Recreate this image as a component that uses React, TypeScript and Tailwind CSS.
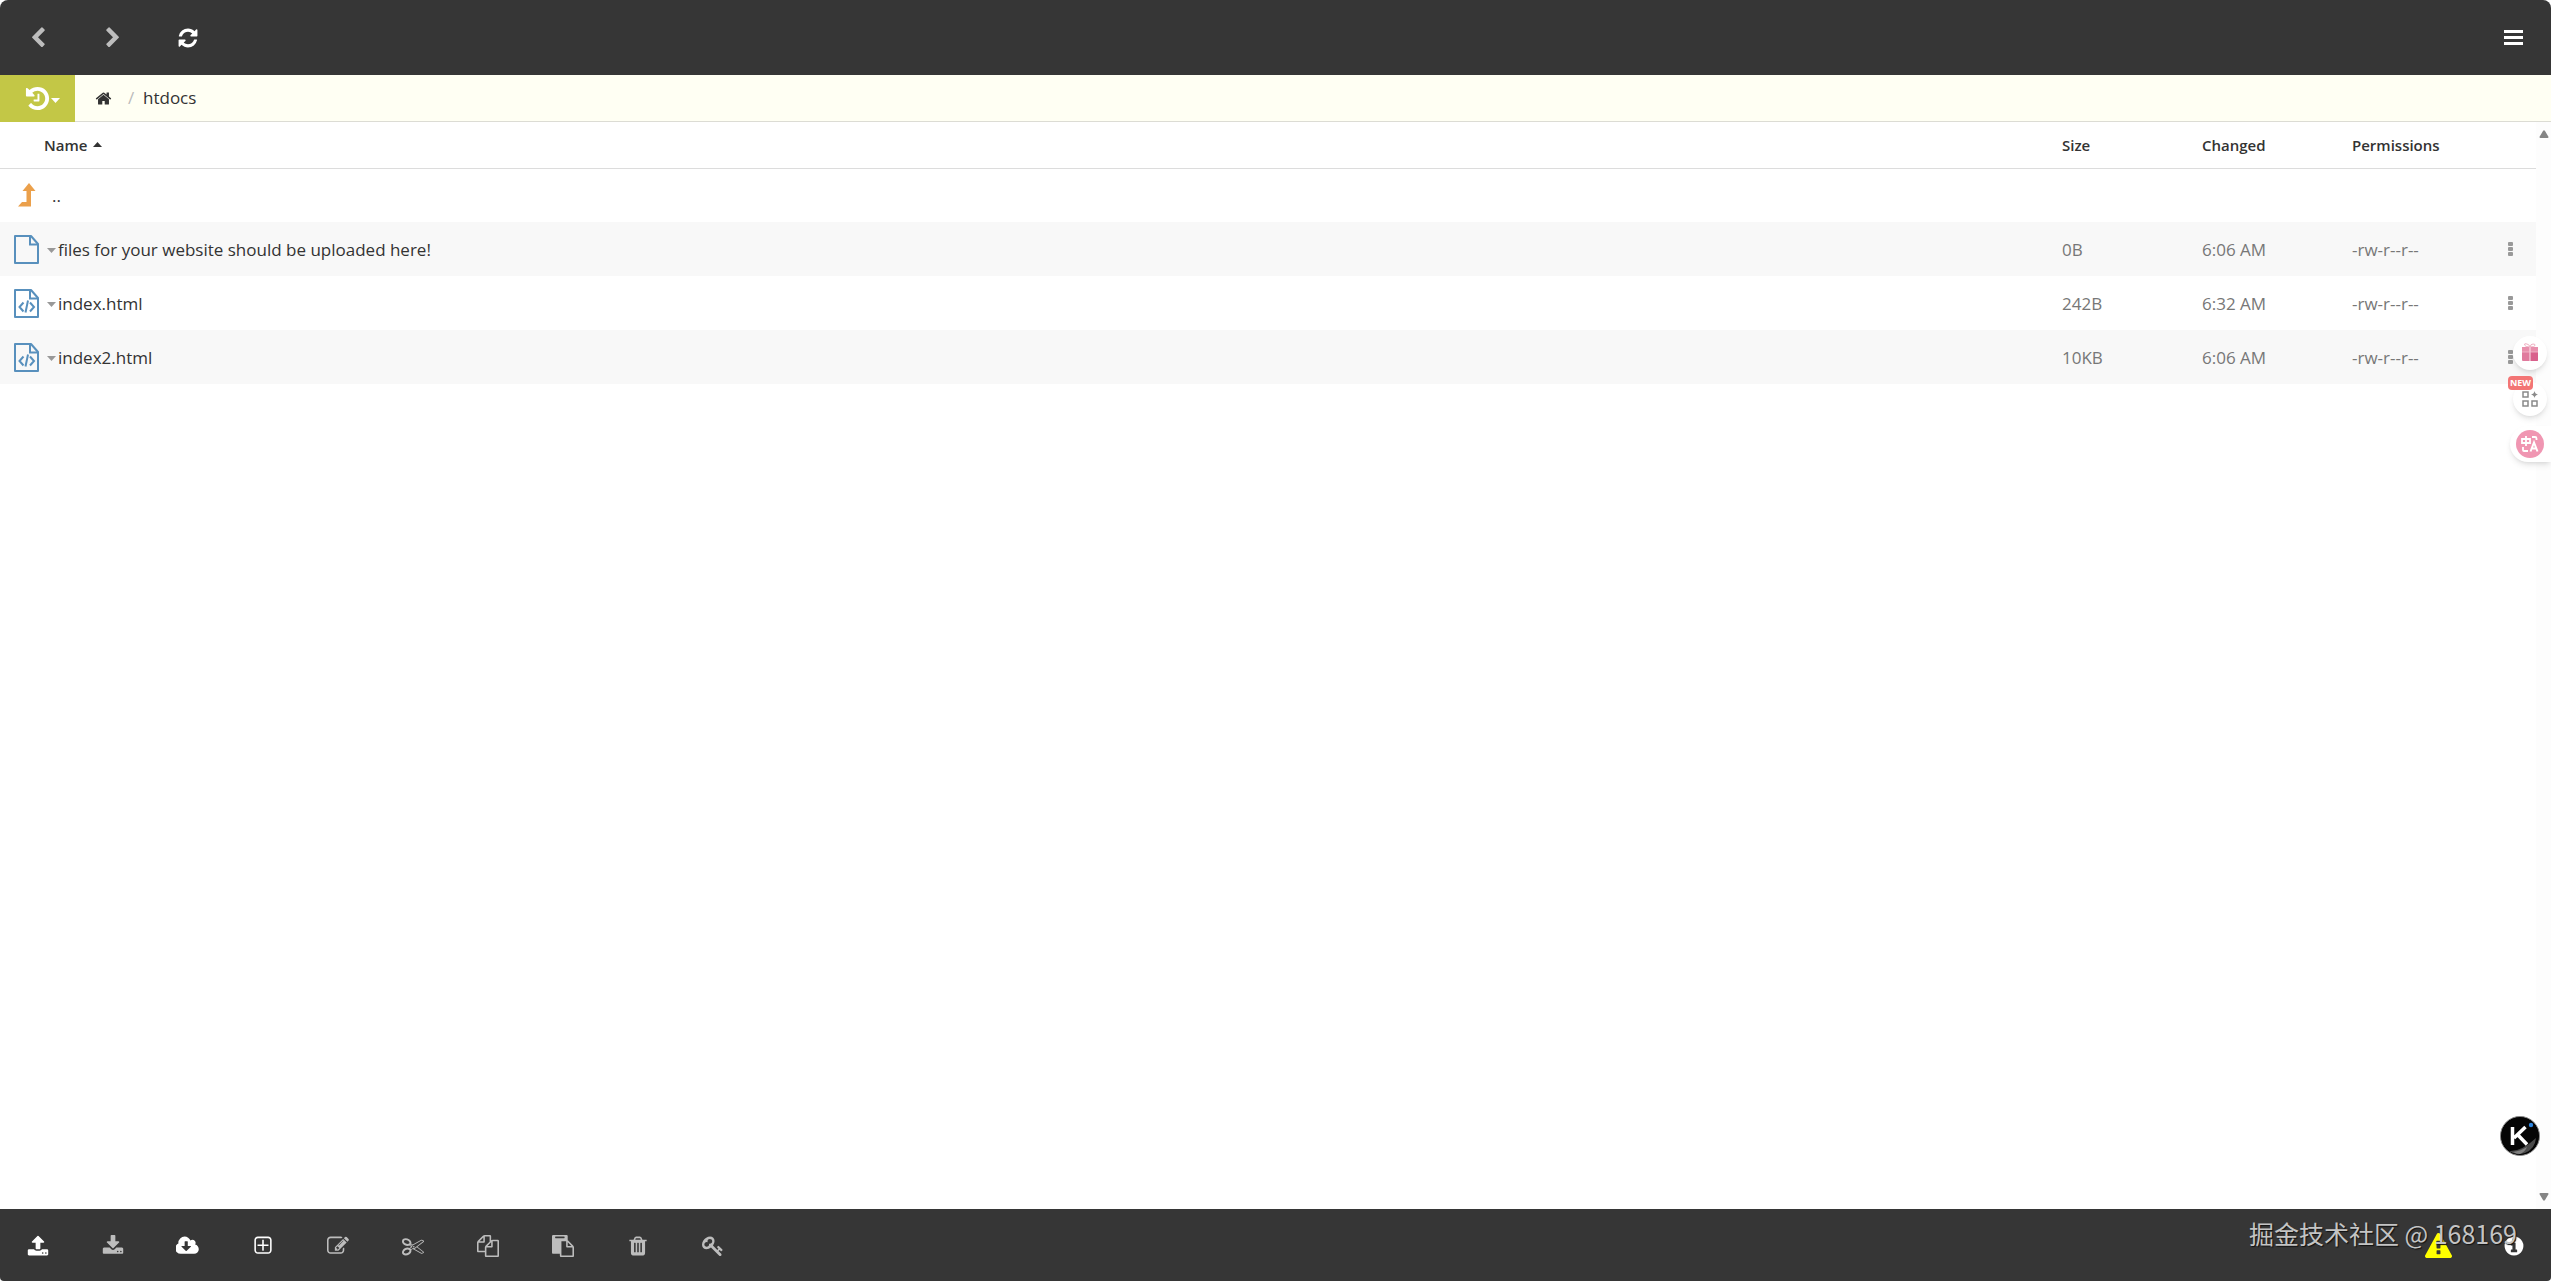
import type { ReactNode } from "react";

type GlyphProps = { d: string; size?: number; width?: number; className?: string };

function Glyph({ d, size = 22, width = 1792, className }: GlyphProps) {
  return (
    <svg
      viewBox={`0 0 ${width} 1792`}
      height={size}
      width={(size * width) / 1792}
      fill="currentColor"
      className={className}
      aria-hidden="true"
    >
      <path d={d} />
    </svg>
  );
}

const paths = {
  back: "M1427 301l-531 531 531 531q19 19 19 45t-19 45l-166 166q-19 19-45 19t-45-19l-742-742q-19-19-19-45t19-45l742-742q19-19 45-19t45 19l166 166q19 19 19 45t-19 45z",
  forward:
    "M1363 877l-742 742q-19 19-45 19t-45-19l-166-166q-19-19-19-45t19-45l531-531-531-531q-19-19-19-45t19-45l166-166q19-19 45-19t45 19l742 742q19 19 19 45t-19 45z",
  refresh:
    "M1639 1056q0 5-1 7-64 268-268 434.5t-478 166.5q-146 0-282.5-55t-243.5-157l-129 129q-19 19-45 19t-45-19-19-45v-448q0-26 19-45t45-19h448q26 0 45 19t19 45-19 45l-137 137q71 66 161 102t187 36q134 0 250-65t186-179q11-17 53-117 8-23 30-23h192q13 0 22.5 9.5t9.5 22.5zm25-800v448q0 26-19 45t-45 19h-448q-26 0-45-19t-19-45 19-45l138-138q-148-137-349-137-134 0-250 65t-186 179q-11 17-53 117-8 23-30 23h-199q-13 0-22.5-9.5t-9.5-22.5v-7q65-268 270-434.5t480-166.5q146 0 284 55.5t245 156.5l130-129q19-19 45-19t45 19 19 45z",
  history:
    "M1664 896q0 156-61 298t-164 245-245 164-298 61q-172 0-327-72.5t-264-204.5q-7-10-6.5-22.5t8.5-20.5l137-138q10-9 25-9 16 2 23 12 73 95 179 147t225 52q104 0 198.5-40.5t163.5-109.5 109.5-163.5 40.5-198.5-40.5-198.5-109.5-163.5-163.5-109.5-198.5-40.5q-98 0-188 35.5t-160 101.5l137 138q31 30 14 69-17 40-59 40h-448q-26 0-45-19t-19-45v-448q0-42 40-59 39-17 69 14l130 129q107-101 244.5-156.5t284.5-55.5q156 0 298 61t245 164 164 245 61 298zm-640-288v448q0 14-9 23t-23 9h-320q-14 0-23-9t-9-23v-64q0-14 9-23t23-9h224v-352q0-14 9-23t23-9h64q14 0 23 9t9 23z",
  home: "M1472 992v480q0 26-19 45t-45 19h-384v-384h-256v384h-384q-26 0-45-19t-19-45v-480q0-1 .5-3t.5-3l575-474 575 474q1 2 1 6zm223-69l-62 74q-8 9-21 11h-3q-13 0-21-7l-692-577-692 577q-12 8-24 7-13-2-21-11l-62-74q-8-10-7-23.5t11-21.5l719-599q32-26 76-26t76 26l244 204v-195q0-14 9-23t23-9h192q14 0 23 9t9 23v408l219 182q10 8 11 21.5t-7 23.5z",
  upload:
    "M1344 1472q0-26-19-45t-45-19-45 19-19 45 19 45 45 19 45-19 19-45zm256 0q0-26-19-45t-45-19-45 19-19 45 19 45 45 19 45-19 19-45zm128-224v320q0 40-28 68t-68 28h-1472q-40 0-68-28t-28-68v-320q0-40 28-68t68-28h427q21 56 70.5 92t110.5 36h256q61 0 110.5-36t70.5-92h427q40 0 68 28t28 68zm-325-648q-17 40-59 40h-256v448q0 26-19 45t-45 19h-256q-26 0-45-19t-19-45v-448h-256q-42 0-59-40-17-39 14-69l448-448q18-19 45-19t45 19l448 448q31 30 14 69z",
  download:
    "M1344 1344q0-26-19-45t-45-19-45 19-19 45 19 45 45 19 45-19 19-45zm256 0q0-26-19-45t-45-19-45 19-19 45 19 45 45 19 45-19 19-45zm128-224v320q0 40-28 68t-68 28h-1472q-40 0-68-28t-28-68v-320q0-40 28-68t68-28h465l135 136q58 56 136 56t136-56l136-136h464q40 0 68 28t28 68zm-325-569q17 41-14 70l-448 448q-18 19-45 19t-45-19l-448-448q-31-29-14-70 17-39 59-39h256v-448q0-26 19-45t45-19h256q26 0 45 19t19 45v448h256q42 0 59 39z",
  cloud:
    "M1216 928q0-14-9-23t-23-9h-224v-352q0-13-9.5-22.5t-22.5-9.5h-192q-13 0-22.5 9.5t-9.5 22.5v352h-224q-13 0-22.5 9.5t-9.5 22.5q0 14 9 23l352 352q9 9 23 9t23-9l351-351q10-12 10-24zm640 224q0 159-112.5 271.5t-271.5 112.5h-1088q-185 0-316.5-131.5t-131.5-316.5q0-130 70-240t188-165q-2-30-2-43 0-212 150-362t362-150q156 0 285.5 87t188.5 231q71-62 166-62 106 0 181 75t75 181q0 76-41 138 130 31 213.5 135.5t83.5 238.5z",
  create:
    "M1344 800v64q0 14-9 23t-23 9h-352v352q0 14-9 23t-23 9h-64q-14 0-23-9t-9-23v-352h-352q-14 0-23-9t-9-23v-64q0-14 9-23t23-9h352v-352q0-14 9-23t23-9h64q14 0 23 9t9 23v352h352q14 0 23 9t9 23zm128 448v-832q0-66-47-113t-113-47h-832q-66 0-113 47t-47 113v832q0 66 47 113t113 47h832q66 0 113-47t47-113zm128-832v832q0 119-84.5 203.5t-203.5 84.5h-832q-119 0-203.5-84.5t-84.5-203.5v-832q0-119 84.5-203.5t203.5-84.5h832q119 0 203.5 84.5t84.5 203.5z",
  edit: "M888 1184l116-116-152-152-116 116v56h96v96h56zm440-720q-16-16-33 1l-350 350q-17 17-1 33t33-1l350-350q17-17 1-33zm80 594v190q0 119-84.5 203.5t-203.5 84.5h-832q-119 0-203.5-84.5t-84.5-203.5v-832q0-119 84.5-203.5t203.5-84.5h832q63 0 117 25 15 7 18 23 3 17-9 29l-49 49q-14 14-32 8-23-6-45-6h-832q-66 0-113 47t-47 113v832q0 66 47 113t113 47h832q66 0 113-47t47-113v-126q0-13 9-22l64-64q15-15 35-7t20 29zm-96-738l288 288-672 672h-288v-288zm444 132l-92 92-288-288 92-92q28-28 68-28t68 28l152 152q28 28 28 68t-28 68z",
  cut: "M960 896q26 0 45 19t19 45-19 45-45 19-45-19-19-45 19-45 45-19zm300 64l507 398q28 20 25 56-5 35-35 51l-128 64q-13 7-29 7-17 0-31-8l-690-387-110 66q-8 4-12 5 14 49 10 97-7 77-56 147.5t-132 123.5q-132 84-277 84-136 0-222-78-90-84-79-207 7-76 56-147t131-124q132-84 278-84 83 0 151 31 9-13 22-22l122-73-122-73q-13-9-22-22-68 31-151 31-146 0-278-84-82-53-131-124t-56-147q-5-59 15.5-113t63.5-93q85-79 222-79 145 0 277 84 83 52 132 123t56 148q4 48-10 97 4 1 12 5l110 66 690-387q14-8 31-8 16 0 29 7l128 64q30 16 35 51 3 36-25 56zm-681-260q46-42 21-108t-106-117q-92-59-192-59-74 0-113 36-46 42-21 108t106 117q92 59 192 59 74 0 113-36zm-85 745q81-51 106-117t-21-108q-39-36-113-36-100 0-192 59-81 51-106 117t21 108q39 36 113 36 100 0 192-59zm178-613l96 58v-11q0-36 33-56l14-8-79-44-26 26q-3 3-10 11t-12 12q-2 2-4 3.5t-3 2.5zm224 224l96 32 736-576-128-64-768 431v113l-160 96 9 8q2 2 7 6 4 4 11 12t11 12l26 26zm704 416l128-64-520-408-177 138q-2 3-13 7z",
  copy: "M1696 384q40 0 68 28t28 68v1216q0 40-28 68t-68 28h-960q-40 0-68-28t-28-68v-288h-544q-40 0-68-28t-28-68v-672q0-40 20-88t48-76l408-408q28-28 76-48t88-20h416q40 0 68 28t28 68v328q68-40 128-40h416zm-544 213l-299 299h299v-299zm-640-384l-299 299h299v-299zm196 647l316-316v-416h-384v416q0 40-28 68t-68 28h-416v640h512v-256q0-40 20-88t48-76zm956 804v-1152h-384v416q0 40-28 68t-68 28h-416v640h896z",
  paste:
    "M768 1664h896v-640h-416q-40 0-68-28t-28-68v-416h-384v1152zm256-1440v-64q0-13-9.5-22.5t-22.5-9.5h-704q-13 0-22.5 9.5t-9.5 22.5v64q0 13 9.5 22.5t22.5 9.5h704q13 0 22.5-9.5t9.5-22.5zm256 672h299l-299-299v299zm512 128v672q0 40-28 68t-68 28h-960q-40 0-68-28t-28-68v-160h-544q-40 0-68-28t-28-68v-1344q0-40 28-68t68-28h1088q40 0 68 28t28 68v328q21 13 36 28l408 408q28 28 48 76t20 88z",
  trash:
    "M704 1376v-704q0-14-9-23t-23-9h-64q-14 0-23 9t-9 23v704q0 14 9 23t23 9h64q14 0 23-9t9-23zm256 0v-704q0-14-9-23t-23-9h-64q-14 0-23 9t-9 23v704q0 14 9 23t23 9h64q14 0 23-9t9-23zm256 0v-704q0-14-9-23t-23-9h-64q-14 0-23 9t-9 23v704q0 14 9 23t23 9h64q14 0 23-9t9-23zm-544-992h448l-48-117q-7-9-17-11h-317q-10 2-17 11zm928 32v64q0 14-9 23t-23 9h-96v948q0 83-47 143.5t-113 60.5h-832q-66 0-113-58.5t-47-141.5v-952h-96q-14 0-23-9t-9-23v-64q0-14 9-23t23-9h309l70-167q15-37 54-63t79-26h320q40 0 79 26t54 63l70 167h309q14 0 23 9t9 23z",
  key: "M832 512q0-80-56-136t-136-56-136 56-56 136q0 42 19 83-41-19-83-19-80 0-136 56t-56 136 56 136 136 56 136-56 56-136q0-42-19-83 41 19 83 19 80 0 136-56t56-136zm851 704q0 17-49 66t-66 49q-9 0-28.5-16t-36.5-33-38.5-40-24.5-26l-96 96 220 220q28 28 28 68 0 42-39 81t-81 39q-40 0-68-28l-671-671q-176 131-365 131-163 0-265.5-102.5t-102.5-265.5q0-160 95-313t248-248 313-95q163 0 265.5 102.5t102.5 265.5q0 189-131 365l355 355 96-96q-3-3-26-24.5t-40-38.5-33-36.5-16-28.5q0-17 49-66t66-49q13 0 23 10 6 6 46 44.5t82 79.5 86.5 86 73 78 28.5 41z",
  warning:
    "M1024 1375v-190q0-14-9.5-23.5t-22.5-9.5h-192q-13 0-22.5 9.5t-9.5 23.5v190q0 14 9.5 23.5t22.5 9.5h192q13 0 22.5-9.5t9.5-23.5zm-2-374l18-459q0-12-10-19-13-11-24-11h-220q-11 0-24 11-10 7-10 21l17 457q0 10 10 16.5t24 6.5h185q14 0 23.5-6.5t10.5-16.5zm-14-934l768 1408q35 63-2 126-17 29-46.5 46t-63.5 17h-1536q-34 0-63.5-17t-46.5-46q-37-63-2-126l768-1408q17-31 47-49t65-18 65 18 47 49z",
  info: "M1152 1376v-160q0-14-9-23t-23-9h-96v-512q0-14-9-23t-23-9h-320q-14 0-23 9t-9 23v160q0 14 9 23t23 9h96v320h-96q-14 0-23 9t-9 23v160q0 14 9 23t23 9h448q14 0 23-9t9-23zm-128-896v-160q0-14-9-23t-23-9h-192q-14 0-23 9t-9 23v160q0 14 9 23t23 9h192q14 0 23-9t9-23zm640 416q0 209-103 385.5t-279.5 279.5-385.5 103-385.5-103-279.5-279.5-103-385.5 103-385.5 279.5-279.5 385.5-103 385.5 103 279.5 279.5 103 385.5z",
};

function Caret({ up = false, className }: { up?: boolean; className?: string }) {
  return (
    <svg width="9" height="5" viewBox="0 0 9 5" fill="currentColor" className={className} aria-hidden="true">
      <path d={up ? "M0 5L4.5 0 9 5z" : "M0 0h9L4.5 5z"} />
    </svg>
  );
}

function ScrollArrow({ down = false }: { down?: boolean }) {
  return (
    <svg width="10" height="8" viewBox="0 0 10 8" fill="#858585" aria-hidden="true">
      <path
        d={
          down
            ? "M1.500 0h7q1.500 0 .8 1.400L6 7q-1 1.500-2 0L.7 1.400Q0 0 1.500 0z"
            : "M1.500 8h7q1.500 0 .8-1.400L6 1q-1-1.500-2 0L.7 6.600Q0 8 1.500 8z"
        }
      />
    </svg>
  );
}

function FileIcon({ code }: { code: boolean }) {
  return (
    <svg width="25" height="29" viewBox="0 0 25 29" fill="none" stroke="#5890bd" strokeWidth="2" aria-hidden="true">
      <path d="M1 1h16l7 8v19H1z" strokeLinejoin="round" />
      <path d="M16 1v8.500h8" />
      {code && <path d="M9.500 13.500L5.500 18l4 4.500M16 13.500l4 4.500-4 4.500M14 11.500l-2.500 12" />}
    </svg>
  );
}

function BarButton({ label, dim = false, children }: { label: string; dim?: boolean; children: ReactNode }) {
  return (
    <button
      type="button"
      aria-label={label}
      className={`flex h-full w-[75px] items-center justify-center ${dim ? "text-[#bdbdbd]" : "text-white"}`}
    >
      {children}
    </button>
  );
}

const actions = [
  { label: "Upload", d: paths.upload, dim: false },
  { label: "Download", d: paths.download, dim: true },
  { label: "Fetch file", d: paths.cloud, dim: false, width: 1920 },
  { label: "New", d: paths.create, dim: false },
  { label: "Edit", d: paths.edit, dim: true },
  { label: "Cut", d: paths.cut, dim: true },
  { label: "Copy", d: paths.copy, dim: true },
  { label: "Paste", d: paths.paste, dim: true },
  { label: "Delete", d: paths.trash, dim: true },
  { label: "Permissions", d: paths.key, dim: true },
];

const files = [
  { name: "files for your website should be uploaded here!", size: "0B", changed: "6:06 AM", code: false },
  { name: "index.html", size: "242B", changed: "6:32 AM", code: true },
  { name: "index2.html", size: "10KB", changed: "6:06 AM", code: true },
];

function TopBar() {
  return (
    <header className="flex h-[75px] shrink-0 justify-between rounded-t-lg bg-[#363636]">
      <div className="flex">
        <BarButton label="Back" dim>
          <Glyph d={paths.back} />
        </BarButton>
        <BarButton label="Forward" dim>
          <Glyph d={paths.forward} />
        </BarButton>
        <BarButton label="Refresh">
          <Glyph d={paths.refresh} />
        </BarButton>
      </div>
      <BarButton label="Menu">
        <svg width="19" height="15" viewBox="0 0 19 15" fill="currentColor" aria-hidden="true">
          <path d="M0 0h19v3H0zM0 6h19v3H0zM0 12h19v3H0z" />
        </svg>
      </BarButton>
    </header>
  );
}

function Breadcrumb() {
  return (
    <nav aria-label="Path" className="flex h-[47px] shrink-0 bg-[#fffff3]">
      <button
        type="button"
        aria-label="History"
        className="flex w-[75px] items-center justify-end bg-[#c3c746] pr-[15px] text-white"
      >
        <Glyph d={paths.history} size={27} />
        <Caret className="mt-1" />
      </button>
      <div className="flex grow items-center border-b border-[#dcdcd4] pl-5">
        <a href="#home" aria-label="Home">
          <Glyph d={paths.home} size={17} />
        </a>
        <span className="w-[31px] pl-4 text-[#bbb]">/</span>
        <a href="#htdocs">htdocs</a>
      </div>
    </nav>
  );
}

function FileTable() {
  return (
    <table className="w-full table-fixed border-collapse self-start text-left">
      <colgroup>
        <col />
        <col className="w-[140px]" />
        <col className="w-[150px]" />
        <col className="w-[142px]" />
        <col className="w-[52px]" />
      </colgroup>
      <thead>
        <tr className="h-[46px] border-b border-[#dcdcdc] text-[15px]">
          <th className="pl-11 font-semibold">
            <button type="button" className="flex items-center gap-1.5">
              Name
              <Caret up />
            </button>
          </th>
          <th className="pl-[10px] font-semibold">Size</th>
          <th className="pl-[10px] font-semibold">Changed</th>
          <th className="pl-[10px] font-semibold">Permissions</th>
          <th aria-label="Actions" />
        </tr>
      </thead>
      <tbody>
        <tr className="h-[54px]">
          <td colSpan={5} className="pl-[18px]">
            <a href="#up" className="flex items-center gap-4">
              <svg width="18" height="24" viewBox="0 0 18 24" fill="#eba04b" aria-hidden="true">
                <path d="M11 0l6.500 8H13v15.500H0L4 19h4.500V8H4.500z" />
              </svg>
              ..
            </a>
          </td>
        </tr>
        {files.map((file) => (
          <tr key={file.name} className="h-[54px] text-[#777] odd:bg-white even:bg-[#f8f8f8]">
            <td className="pl-[14px]">
              <div className="flex items-center">
                <FileIcon code={file.code} />
                <Caret className="ml-2 mr-0.5 mt-0.5 text-[#999]" />
                <a href={`#${file.name}`} className="pt-0.5 text-[#333]">
                  {file.name}
                </a>
              </div>
            </td>
            <td className="pl-[10px] pt-0.5">{file.size}</td>
            <td className="pl-[10px] pt-0.5">{file.changed}</td>
            <td className="pl-[10px] pt-0.5">-rw-r--r--</td>
            <td>
              <button type="button" aria-label={`Actions for ${file.name}`} className="flex w-full justify-center">
                <svg width="5" height="15" viewBox="0 0 5 15" fill="#999" aria-hidden="true">
                  <rect width="5" height="4" rx="1" />
                  <rect y="5" width="5" height="4" rx="1" />
                  <rect y="10" width="5" height="4" rx="1" />
                </svg>
              </button>
            </td>
          </tr>
        ))}
      </tbody>
    </table>
  );
}

// Browser extension widgets that float over the right edge
function FloatingTools() {
  return (
    <div className="absolute right-0 top-[336px] flex flex-col items-end">
      <button
        type="button"
        aria-label="Rewards"
        className="mr-1 flex size-[34px] items-center justify-center rounded-full bg-white shadow-md"
      >
        <svg width="18" height="20" viewBox="0 0 18 20" aria-hidden="true">
          <path d="M9 4Q4 4 3.500 2T6 1t3 3q.5-3 3-3t2 1.500T9 4z" fill="none" stroke="#eeb0c2" />
          <path d="M1 4h16v5H1z" fill="#e88fac" />
          <path d="M1 9h16v8q0 1-1 1H2q-1 0-1-1z" fill="#e07a9d" />
          <path d="M9 9h8v8q0 1-1 1H9z" fill="#d9608c" />
          <path d="M9 4v14" stroke="#fbe6ed" strokeWidth="1" />
          <path d="M1 9h16" stroke="#f3bccd" strokeWidth=".8" />
        </svg>
      </button>
      <div className="relative mr-1 mt-3">
        <button
          type="button"
          aria-label="Apps"
          className="flex size-[34px] items-center justify-center rounded-full bg-white shadow-md"
        >
          <svg width="16" height="16" viewBox="0 0 16 16" fill="none" stroke="#8a8a8a" strokeWidth="1.500" aria-hidden="true">
            <path d="M1 1h5v5H1zM1 10h5v5H1zM10 10h5v5h-5z" />
            <path d="M12.500 0q.5 3 3.500 3.500-3 .5-3.500 3.500-.5-3-3.500-3.500 3-.5 3.500-3.500z" fill="#8a8a8a" stroke="none" />
          </svg>
        </button>
        <span className="absolute -top-1.5 right-3.5 rounded bg-[#f37575] px-0.5 text-[9px] font-bold leading-[14px] text-white">
          NEW
        </span>
      </div>
      <div className="mt-2.5 flex h-9 w-[41px] items-center rounded-l-full bg-white pl-1.5 shadow-md">
        <button
          type="button"
          aria-label="Translate"
          className="flex size-7 items-center justify-center rounded-full bg-[#f096b2]"
        >
          <svg width="18" height="18" viewBox="0 0 18 18" fill="none" stroke="#fff" strokeWidth="1.800" aria-hidden="true">
            <path d="M1 4h8v4H1zM5 1v10M2 12v3q0 1 1 1h4M11 2h3q1.500 0 1.500 1.500V5" />
            <path d="M9.500 16.500l3.500-9 3.500 9M10.500 13.500h5" strokeWidth="2" />
          </svg>
        </button>
      </div>
    </div>
  );
}

function Assistant() {
  return (
    <button
      type="button"
      aria-label="Assistant"
      className="absolute bottom-[53px] right-[11px] size-10 rounded-full border border-[#888] bg-black"
    >
      <svg width="38" height="38" viewBox="0 0 38 38" aria-hidden="true">
        <circle cx="19" cy="19" r="18.500" fill="#050505" />
        <path d="M8 34q12 1 27-13-1 11-11 15-9 3-16-2z" fill="#4a4a4a" />
        <path d="M12 35q8-1 14-5-2 5-7 7-4 0-7-2z" fill="#808080" />
        <path d="M11.500 10v18M24.500 10L13 21M17 18l9 9.500" stroke="#fff" strokeWidth="3.500" fill="none" />
        <circle cx="30" cy="8" r="2.200" fill="#2e86e0" />
      </svg>
    </button>
  );
}

function BottomBar() {
  return (
    <footer className="relative flex h-[72px] shrink-0 justify-between rounded-b-sm bg-[#363636] pt-0.5">
      <div className="flex">
        {actions.map((action) => (
          <BarButton key={action.label} label={action.label} dim={action.dim}>
            <Glyph d={action.d} width={action.width} />
          </BarButton>
        ))}
      </div>
      <div className="flex">
        <BarButton label="Warnings">
          <Glyph d={paths.warning} size={27} className="text-[#ff0]" />
        </BarButton>
        <BarButton label="Info">
          <Glyph d={paths.info} />
        </BarButton>
      </div>
      <p className="absolute right-[34px] top-1.5 whitespace-nowrap font-['Noto_Sans_CJK_SC',sans-serif] text-[25px] leading-9 text-[#c4c4c4] [text-shadow:1px_1px_1px_#111]">
        掘金技术社区 @ 168169
      </p>
    </footer>
  );
}

export default function App() {
  return (
    <div className="flex h-screen flex-col bg-white font-['Open_Sans',sans-serif] text-[17px] text-[#333]">
      <TopBar />
      <Breadcrumb />
      <main className="relative flex min-h-0 grow">
        <FileTable />
        <div className="flex w-[15px] shrink-0 flex-col items-center justify-between bg-[#fdfdfd] py-2">
          <ScrollArrow />
          <ScrollArrow down />
        </div>
        <Assistant />
      </main>
      <BottomBar />
      <FloatingTools />
    </div>
  );
}
